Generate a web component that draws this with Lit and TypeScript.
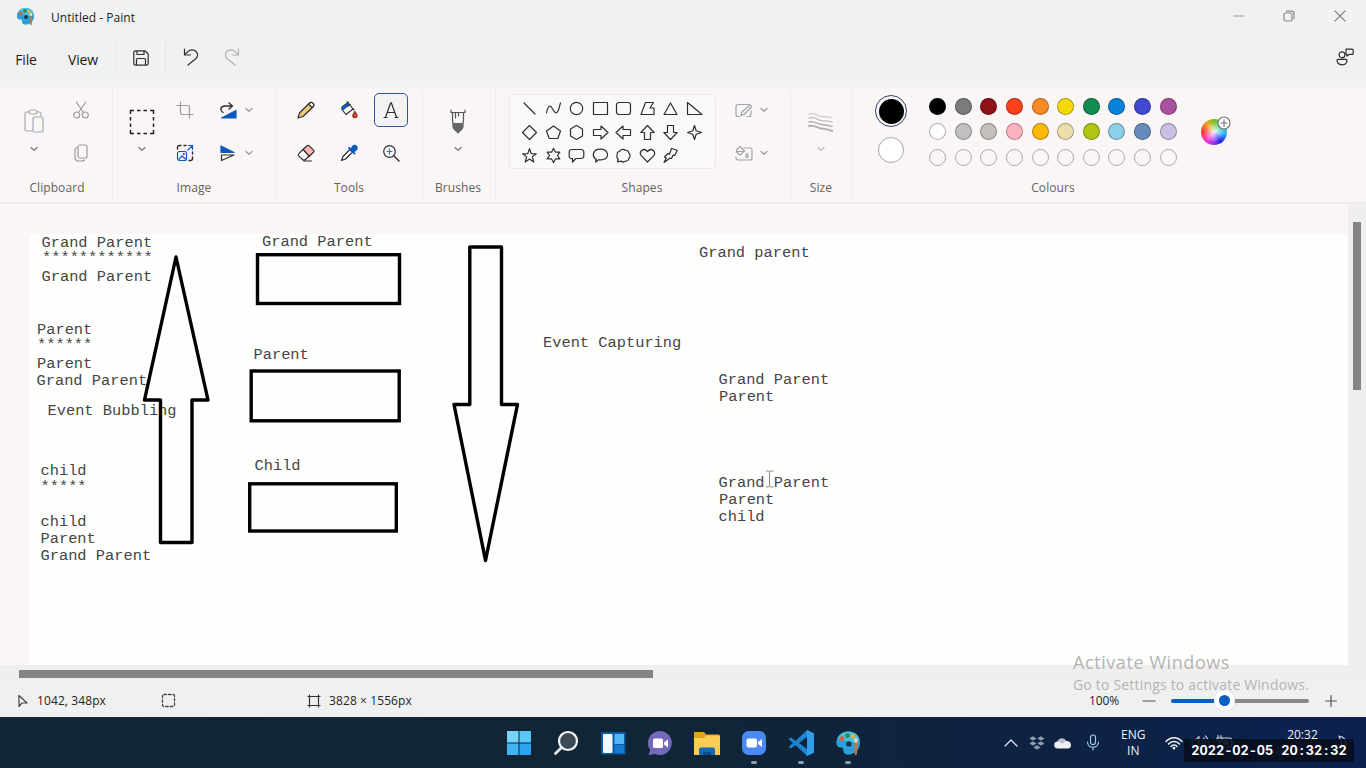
import { LitElement, html, svg, css } from "lit";
import { customElement } from "lit/decorators.js";

const icon = (w: number, h: number, body: unknown, color = "#2f2f2f") => html`
  <svg width=${w} height=${h} viewBox="0 0 ${w} ${h}" fill="none" stroke=${color}
    stroke-width="1.2" stroke-linecap="round" stroke-linejoin="round">${body}</svg>`;

const GREY = "#9c9c9e";
const BLUE = "#0a59bd";

const chevron = (color = "#77777a") => icon(8, 6, svg`<path d="M1 1.5 4 4.3 7 1.5"/>`, color);

const palette = () => svg`
  <path d="M9.5 1C4 1 1 5 1 9c0 2 1 3.4 2.6 3.5 2.4 0 2.4.6 2.4 2.2C6 17 8 18 10.5 17.600 15 17 18 13.500 18 9 18 4.500 14.500 1 9.500 1Z" fill="#2d9fd9" stroke="none"/>
  <path d="M2 6C4 2 7 1 10 1c4 0 7 3 7.700 6L12 9 8 8Z" fill="#43c1e4" stroke="none"/>
  <circle cx="5" cy="6.200" r="1.700" fill="#d95c3c" stroke="none"/>
  <circle cx="9" cy="4" r="1.700" fill="#40823b" stroke="none"/>
  <circle cx="13" cy="4.500" r="1.600" fill="#e6b33b" stroke="none"/>
  <circle cx="10" cy="10" r="1.900" fill="#15334d" stroke="none"/>
  <path d="M13.800 6h2.400v7.500l-.6 4.500h-1.200l-.6-4.500z" fill="#b77b48" stroke="none"/>
  <path d="M13.800 6h2.400v3h-2.400z" fill="#ead9bd" stroke="none"/>`;

const SHAPES = [
  svg`<path d="M3 3 14 14"/>`,
  svg`<path d="M1.500 13C3 5.500 5 4.500 7 8s4 7 6 3 1.500-6 2.500-8"/>`,
  svg`<circle cx="8.500" cy="8.500" r="6.200"/>`,
  svg`<rect x="1.500" y="2.500" width="14" height="12"/>`,
  svg`<rect x="1.500" y="2.500" width="14" height="12" rx="2.500"/>`,
  svg`<path d="M6.500 2.500h8L11 8h4v6.500H2z"/>`,
  svg`<path d="M8.500 3 15 14.500H2z"/>`,
  svg`<path d="M1.500 2.500v12h14.500z"/>`,
  svg`<path d="m8.500 1.500 7 7-7 7-7-7z"/>`,
  svg`<path d="m8.500 2 7 5-2.700 7.500H4.200L1.500 7z"/>`,
  svg`<path d="m8.500 1.500 6 3.400v7.200l-6 3.400-6-3.400V4.900z"/>`,
  svg`<path d="M1.500 5.500H9V2l7 6.500L9 15v-3.500H1.500z"/>`,
  svg`<path d="M15.500 5.500H8V2L1 8.500 8 15v-3.500h7.500z"/>`,
  svg`<path d="M5.500 15.500V8.500H1.800L8.500 1.500l6.700 7h-3.700v7z"/>`,
  svg`<path d="M5.500 1.500v7H1.800l6.700 7 6.700-7h-3.700v-7z"/>`,
  svg`<path d="m8.500 1.500 1.700 5.300 5.300 1.700-5.300 1.700-1.700 5.300-1.700-5.300-5.300-1.700 5.300-1.700z"/>`,
  svg`<path d="m8.500 1.800 1.800 4.900 5 .1-4 3.100 1.500 5-4.300-3-4.300 3 1.500-5-4-3.100 5-.1z"/>`,
  svg`<path d="m8.500 1.500 2 3.700h4.300L12.500 8.500l2.300 3.300h-4.300l-2 3.700-2-3.700H2.200l2.300-3.300-2.300-3.300h4.300z"/>`,
  svg`<path d="M4 2.500h9A2.500 2.500 0 0 1 15.800 5v4A2.500 2.500 0 0 1 13 11.500H8L4.500 15v-3.500A2.500 2.500 0 0 1 1.200 9V5A2.500 2.500 0 0 1 4 2.500z"/>`,
  svg`<path d="M3.500 15l.8-2.600C-.5 9.500.5 2.200 8.500 2.200s9 8 3.500 10c-2.500 1-4.500.8-5.500.500z"/>`,
  svg`<path d="M2.500 14.800 3.200 12C1.500 11 1.500 9 2.200 8c-.5-2 .5-3.500 2.500-3.700C6 2 9 1.800 10.300 3.300c2-.3 3.500 1 3.700 3 1.500 1.300 1.300 3.700 0 4.700 0 2-1.500 3.300-3.500 3-1.500 1.200-3.500 1-4.500 0z"/>`,
  svg`<path d="M8.500 15 2.200 8.700C-.5 5 4.500-.2 8.500 4.500c4-4.700 9 .5 6.300 4.200z"/>`,
  svg`<path d="m9.500 1.500 5.700 1.800-2.500 5.200-1.700-.3-1.500 3.300-1.800-.3-5.700 4.300L4.300 11l-1.800-1 3.500-3.500 1.500.8z"/>`,
];

const SWATCHES = [
  ["#000000", "#7b7b7a", "#8e1216", "#fb401c", "#fb8a25", "#f7d90a", "#128b50", "#0883dc", "#4149d0", "#a8529f"],
  ["#ffffff", "#c0c0bf", "#c4bfbd", "#fdb3c2", "#fdb808", "#ecdfaa", "#b0c612", "#8dcfe8", "#668bbb", "#c9c0e4"],
  Array(10).fill("transparent"),
];

const NOTES: [number, number, string][] = [
  [41.500, 235, "Grand Parent"], [42, 250, "************"], [41.500, 269, "Grand Parent"],
  [37, 322, "Parent"], [37, 337, "******"], [37, 356, "Parent"], [36.500, 373, "Grand Parent"],
  [47.500, 403, "Event Bubbling"],
  [40.500, 463, "child"], [40.500, 479, "*****"],
  [40.500, 514, "child"], [40.500, 531, "Parent"], [40.500, 548, "Grand Parent"],
  [262, 234, "Grand Parent"], [253.500, 347, "Parent"], [254.500, 458, "Child"],
  [699, 245, "Grand parent"], [543, 335, "Event Capturing"],
  [718.500, 372, "Grand Parent"], [719, 389, "Parent"],
  [718.500, 475, "Grand Parent"], [719, 492, "Parent"], [718.500, 509, "child"],
];

@customElement("paint-titlebar")
class PaintTitlebar extends LitElement {
  static styles = css`
    :host { display: block; background: #f0f1f1; color: #1d1d1d; }
    svg { display: block; }
    .title { display: flex; align-items: center; height: 33px; padding-left: 16px; }
    .name { font-size: 12px; letter-spacing: 0.04px; margin-left: 16px; flex: 1; padding-top: 1px; }
    .win { display: grid; grid-template-columns: 50px 50px 51px; place-items: center; padding: 0 1px 2px 0; }
    .menu { display: grid; grid-template-columns: 52px 62px 53px 47px 36px 1fr 43px; height: 53px; align-items: center; justify-items: center; box-sizing: border-box; }
    .item { font-size: 14px; letter-spacing: -0.2px; padding-bottom: 1px; }
    .save { display: grid; place-items: center; width: 49px; height: 31px; border-left: 1px solid #e6e6e7; border-right: 1px solid #e6e6e7; margin-bottom: 4px; }
    .hist { padding-bottom: 5px; }
  `;
  render() {
    return html`
      <div class="title">
        ${icon(19, 19, palette())}
        <span class="name">Untitled - Paint</span>
        <div class="win">
          ${icon(12, 12, svg`<path d="M1 6h10"/>`, GREY)}
          ${icon(12, 12, svg`<rect x="1" y="3" width="8" height="8" rx="1.500"/><path d="M3.500 1.200h5a2.500 2.500 0 0 1 2.500 2.500v5"/>`, "#8a8a8a")}
          ${icon(12, 12, svg`<path d="m1 1 10 10M11 1 1 11"/>`, "#8a8a8a")}
        </div>
      </div>
      <div class="menu">
        <span class="item">File</span>
        <span class="item">View</span>
        <div class="save">${icon(16, 16, svg`<path d="M2.500.8h9.300l3.400 3.200v9.500a1.700 1.700 0 0 1-1.700 1.700h-11A1.700 1.700 0 0 1 .8 13.500v-11A1.700 1.700 0 0 1 2.500.8zM4 1v3.500h7V1M3.500 15V9.500a1 1 0 0 1 1-1h7a1 1 0 0 1 1 1V15"/>`)}</div>
        <div class="hist">${icon(16, 18, svg`<path d="M1.500 1v6h6M2 6.500C5 2.500 9 .5 12.500 3c3 2.500 2.300 5.500.5 7.500L5 17"/>`)}</div>
        <div class="hist">${icon(16, 18, svg`<path d="M14.500 1v6h-6M14 6.500C11 2.500 7 .5 3.500 3c-3 2.500-2.300 5.500-.5 7.500L11 17"/>`, "#b0b0b2")}</div>
        <span></span>
        <div class="hist">${icon(18, 18, svg`<circle cx="6" cy="6.800" r="3"/><path d="M2 11.300h8a1 1 0 0 1 1 1C11 15 9 16.800 6 16.800s-5-1.800-5-4.500a1 1 0 0 1 1-1zM10 1.200h6.200a1 1 0 0 1 1 1v3.200a1 1 0 0 1-1 1h-3L11 8V6.300h-1z"/>`)}</div>
      </div>`;
  }
}

@customElement("paint-ribbon")
class PaintRibbon extends LitElement {
  static styles = css`
    :host { display: flex; height: 118px; background: #f9f6f5; border-bottom: 2px solid #ecebeb; box-sizing: border-box; box-shadow: inset 0 2px 1px #f4f3f3; }
    svg { display: block; }
    .group { display: flex; flex-direction: column; box-sizing: border-box; border-right: 1px solid #eeecec; }
    .group.last { border-right: none; }
    .body { display: grid; grid-template-rows: 43px 43px; height: 89px; padding-top: 2.500px; box-sizing: border-box; place-items: center; align-content: start; justify-content: start; }
    .label { font-size: 12px; letter-spacing: 0.08px; line-height: 16px; padding-top: 5px; text-align: center; color: #636262; }
    .big { grid-row: 1 / 3; align-self: start; display: flex; flex-direction: column; align-items: center; justify-content: space-between; height: 43px; padding-top: 20.500px; }
    .clipboard { width: 113px; }
    .clipboard .body { grid-template-columns: 44px 50px; padding-left: 12px; }
    .clipboard .label { padding-left: 2px; }
    .image { width: 163px; }
    .image .body { grid-template-columns: 56px 30px 12px 32px 10px; padding-left: 1px; }
    .tools { width: 147px; }
    .tools .body { grid-template-columns: 42.500px 42.500px 42.500px; padding-left: 9px; }
    .tools .active { display: grid; place-items: center; width: 34px; height: 34px; box-sizing: border-box; border: 1.500px solid #2b5797; border-radius: 5px; background: #f4f2f2; }
    .brushes { width: 73px; }
    .brushes .body { justify-content: center; }
    .brushes .body, .brushes .label { padding-right: 2px; }
    .shapes { width: 295px; }
    .shapes .body { grid-template-columns: 207px 16px 24px 16px; padding-left: 13px; }
    .shapes .label { padding-right: 2px; }
    .gallery { grid-row: 1 / 3; display: grid; grid-template-columns: repeat(8, 23.500px); grid-template-rows: repeat(3, 23.500px); width: 207px; height: 75px; padding: 2px 11px 2px 8px; box-sizing: border-box; place-items: center; border: 1px solid #ebe9e9; border-radius: 4px; background: #fbf9f8; align-self: start; margin-top: 5.500px; }
    .size { width: 61px; }
    .size .body { justify-content: center; }
    .colours { width: 402px; }
    .colours .body { display: flex; align-items: flex-start; padding: 0 0 0 22px; }
    .current { display: flex; flex-direction: column; align-items: center; gap: 10px; padding-top: 9px; width: 34px; }
    .primary { width: 32px; height: 32px; box-sizing: border-box; border-radius: 50%; border: 1.500px solid #2d4470; padding: 2.500px; background: #000 content-box; }
    .secondary { width: 26px; height: 26px; box-sizing: border-box; border-radius: 50%; border: 1.500px solid #a8a7a7; background: #fff; }
    .swatches { display: grid; grid-template-columns: repeat(10, 25.600px); grid-auto-rows: 25.600px; margin: 7.500px 0 0 17px; place-items: center; }
    .swatch { width: 17px; height: 17px; box-sizing: border-box; border-radius: 50%; border: 1.500px solid #0000004d; }
    .wheel { position: relative; width: 26px; height: 26px; border-radius: 50%; margin: 33px 0 0 20px; background: radial-gradient(circle, #ffffffe6 0, #ffffff00 58%), conic-gradient(#6fc41c, #3fd0b0 60deg, #28b8f0 95deg, #2222ee 145deg, #8a2df0 175deg, #f63ad0 220deg, #fb3d2a 275deg, #f5a020 320deg, #6fc41c); }
    .plus { position: absolute; left: 16px; top: -3px; }
  `;
  render() {
    return html`
      <div class="group clipboard">
        <div class="body">
          <div class="big">
            ${icon(20, 24, svg`<path d="M8 22H2.500A1.500 1.500 0 0 1 1 20.500v-16A1.500 1.500 0 0 1 2.500 3H5M13 3h2.500A1.500 1.500 0 0 1 17 4.500V7"/><rect x="5" y="1" width="8" height="4" rx="2"/><rect x="9" y="8" width="10" height="15" rx="1.500" stroke="#9ca8bd"/>`, "#aaa9aa")}
            ${chevron()}
          </div>
          ${icon(16, 18, svg`<circle cx="3.700" cy="14" r="3"/><circle cx="12.300" cy="14" r="3"/><path d="M3.300 1 10.500 11.500M12.700 1 5.500 11.500"/>`, GREY)}
          ${icon(14, 18, svg`<rect x="4" y="1" width="9" height="13" rx="2"/><path d="M2.500 3.500C1.500 4 1 4.500 1 6v7.500A3.500 3.500 0 0 0 4.500 17H8c1.500 0 2-.500 2.500-1"/>`, GREY)}
        </div>
        <span class="label">Clipboard</span>
      </div>
      <div class="group image">
        <div class="body">
          <div class="big">
            ${icon(26, 26, svg`<path d="M1.500 5V1.500H5M8 1.500h3.500M14.500 1.500H18M21 1.500h3.500V5M24.500 8v3.500M24.500 14.500V18M24.500 21v3.500H21M18 24.500h-3.500M11.500 24.500H8M5 24.500H1.500V21M1.500 18v-3.500M1.500 11.500V8" stroke-width="1.500" stroke-linecap="butt" stroke-linejoin="miter"/>`, "#222")}
            ${chevron()}
          </div>
          ${icon(18, 18, svg`<path d="M4.500 1v11a1.500 1.500 0 0 0 1.500 1.500h11M1 4.500h11A1.500 1.500 0 0 1 13.500 6v11"/>`, GREY)}
          <span></span>
          ${icon(17, 17, svg`<path d="M16 8.500V16H1.500z" fill=${BLUE} stroke=${BLUE}/><path d="M3 10.500C-.5 8 .5 4 5 4h7M9 1l3.500 3L9 7" stroke-width="1.400"/>`)}
          ${chevron("#9c9c9e")}
          ${icon(18, 18, svg`<path d="M1.500 5V3.500a2 2 0 0 1 2-2H5M8 1.500h2M16.500 8v2M16.500 13v1.500a2 2 0 0 1-2 2H13" stroke-width="1.400"/><rect x="1.500" y="7.500" width="9" height="9" rx="2" stroke=${BLUE}/><path d="m3 15 3-3 3.500 3M12 6l4.500-4.500M12.500 1.500h4v4" stroke=${BLUE}/><circle cx="7.800" cy="10" r=".5" stroke=${BLUE}/>`)}
          <span></span>
          ${icon(16, 17, svg`<path d="M1 1v6.500h13z" fill=${BLUE} stroke=${BLUE}/><path d="M1.500 10v5.500L14 10z"/>`)}
          ${chevron("#9c9c9e")}
        </div>
        <span class="label">Image</span>
      </div>
      <div class="group tools">
        <div class="body">
          ${icon(18, 18, svg`<path d="m1 17 1.500-5L12.500 2a2 2 0 0 1 3 0l.7.700a2 2 0 0 1 0 3L6 15.500z" fill="#e9cb78"/><path d="m11.500 3 3.500 3.500 1.200-1.200a2 2 0 0 0 0-2.600l-.6-.6a2 2 0 0 0-2.800 0z" fill="#fff"/>`)}
          ${icon(18, 18, svg`<path d="M2 6 8 1.500 13 8l-7 5.500-4-5z" fill="#fff"/><path d="m2 7.500 6-5 1 1.200-6 5z" fill=${BLUE} stroke=${BLUE}/><path d="M8 1.500 7 .8M8 5l2-1.500M13 8l1 .8"/><path d="M15 10.500c1.500 2 2 3 2 4a2 2 0 0 1-4.200 0c0-1 .8-2 2.200-4z" fill="#d24a2a" stroke="#8b3520"/>`)}
          <div class="active">${icon(18, 18, svg`<path d="M2 16.500h3M13 16.500h3M3.500 16.300 8.700 1.800h.6L14.500 16.300M5.500 11.500h7"/>`)}</div>
          ${icon(18, 18, svg`<path d="m6 5.500 4-3.800a1.500 1.500 0 0 1 2 0l4.500 4.500a1.500 1.500 0 0 1 0 2L12 12.500z" fill="#fbb4b2"/><path d="m6 5.500 6 6.500-3.500 3.500a2 2 0 0 1-3 0l-3.700-3.700a1.500 1.500 0 0 1 0-2.200z" fill="#fff"/><path d="M7 17h7.500"/>`)}
          ${icon(18, 18, svg`<path d="M1.500 16.500 3 12.500l7-7 2.500 2.500-7 7z" fill="#fff"/><path d="m9 4 5.500 5.500M11 5.500l2-3a2 2 0 0 1 3.200 0 2 2 0 0 1 0 3L13 8z" fill=${BLUE} stroke=${BLUE} stroke-width="1.800"/>`)}
          ${icon(18, 18, svg`<circle cx="7.500" cy="7.500" r="5.800"/><path d="m12 12 5 5" stroke-width="1.400"/><path d="M7.500 5v5M5 7.500h5" stroke="#3478bb"/>`)}
        </div>
        <span class="label">Tools</span>
      </div>
      <div class="group brushes">
        <div class="body">
          <div class="big">
            ${icon(16, 25, svg`<path d="M1 1v2.500h14V1M2.500 4v8l1.500 5h8l1.500-5V4M5.500 4v5M8.500 4v3"/><path d="M3 14.500h10V18c0 2-3 3-5 6-2-3-5-4-5-6z" fill="#666" stroke="#666"/>`, "#555")}
            ${chevron()}
          </div>
        </div>
        <span class="label">Brushes</span>
      </div>
      <div class="group shapes">
        <div class="body">
          <div class="gallery">${SHAPES.map((s) => icon(17, 17, s))}</div>
          <span></span>
          ${icon(18, 15, svg`<path d="M15 1.500H3a2 2 0 0 0-2 2v8a2 2 0 0 0 2 2h2M12 13.500h2a2 2 0 0 0 2-2V8M6 12.500l1-3.500 7.500-6.500q2-.5 2 1.500L9 11.500z"/>`, "#a0a3aa")}
          ${chevron("#9c9c9e")}
          <span></span>
          ${icon(18, 16, svg`<path d="M9 3h6a2 2 0 0 1 2 2v8a2 2 0 0 1-2 2H3a2 2 0 0 1-2-2v-1M5 1.500 1.500 5v2L5 10l4.500-4zM2 6.500h7M12 8.500c1.500 2 1.500 4 0 4s-1.500-2 0-4z"/>`, "#a3a3a5")}
          ${chevron("#9c9c9e")}
        </div>
        <span class="label">Shapes</span>
      </div>
      <div class="group size">
        <div class="body">
          <div class="big">
            ${icon(26, 25, svg`<path d="M1 5c6-2 8 2 12 2.500s7 0 11 1" stroke-width=".8"/><path d="M1 9c6-2 8 2 12 2.500s7 0 11 1.500" stroke-width="1.200"/><path d="M1 13c6-1.500 8 2 12 2.500s7 .500 11 2" stroke-width="1.600"/><path d="M1 17c6-1.500 8 2 12 2.500s7 .500 11 2.500" stroke-width="2"/>`, "#b2b1b1")}
            ${chevron("#bcbcbd")}
          </div>
        </div>
        <span class="label">Size</span>
      </div>
      <div class="group colours last">
        <div class="body">
          <div class="current"><div class="primary"></div><div class="secondary"></div></div>
          <div class="swatches">
            ${SWATCHES.flat().map((c) => html`<div class="swatch" style="background-color:${c}"></div>`)}
          </div>
          <div class="wheel">
            <span class="plus">${icon(14, 14, svg`<circle cx="7" cy="7" r="6" fill="#fff"/><path d="M7 3.800v6.400M3.800 7h6.400"/>`, "#777")}</span>
          </div>
        </div>
        <span class="label">Colours</span>
      </div>`;
  }
}

@customElement("paint-workspace")
class PaintWorkspace extends LitElement {
  static styles = css`
    :host { display: grid; grid-template-columns: 1348px 18px; grid-template-rows: 461px 18px; background: #f0efee; }
    .stage { background: #f9f6f5; padding: 30px 0 0 29px; }
    .canvas { position: relative; height: 431px; background: #fefefd; }
    .drawing { position: absolute; left: 0; top: 0; }
    .note { position: absolute; white-space: pre; font: 15.360px/17px "Liberation Mono", monospace; color: #454545; }
    .vscroll { padding: 18px 5px 0; }
    .vthumb { height: 168px; background: #858483; }
    .hscroll { padding: 5px 0 0 19px; }
    .hthumb { width: 634px; height: 8px; background: #858483; }
  `;
  render() {
    return html`
      <div class="stage">
        <div class="canvas">
          ${NOTES.map(([x, y, text]) => html`<span class="note" style="left:${x - 29}px;top:${y - 234}px">${text}</span>`)}
          <svg class="drawing" width="1319" height="431" viewBox="29 234 1319 431" fill="none" stroke="#000" stroke-width="3.400" stroke-linejoin="round">
            <path d="M176 257 144.500 400H160.500V542.500H192V400H208z"/>
            <path d="M469.800 247H501.500V404.500H517.500L485.500 560.500 454 404.500H469.800z"/>
            <rect x="257.500" y="254.700" width="142" height="48.800" stroke-linejoin="miter"/>
            <rect x="251.200" y="371" width="148" height="49.800" stroke-linejoin="miter"/>
            <rect x="249.700" y="483.800" width="146.600" height="47.200" stroke-linejoin="miter"/>
            <path d="M766 471h2.500l1 1 1-1h3M769.500 472v14M766 487h2.500l1-1 1 1h3" stroke="#888" stroke-width="1"/>
          </svg>
        </div>
      </div>
      <div class="vscroll"><div class="vthumb"></div></div>
      <div class="hscroll"><div class="hthumb"></div></div>`;
  }
}

@customElement("paint-status")
class PaintStatus extends LitElement {
  static styles = css`
    :host { display: grid; grid-template-columns: 18px 19px 124px 146px 22px 760px 53px 29px 138px 1fr; align-items: center; height: 34px; background: #f0f0f0; font-size: 12px; letter-spacing: 0.1px; color: #262626; box-sizing: border-box; padding-top: 1px; position: relative; }
    svg { display: block; }
    .zoom { letter-spacing: -0.1px; }
    .slider { display: flex; align-items: center; }
    .filled { width: 43px; height: 4px; border-radius: 2px 0 0 2px; background: #0a5fc0; }
    .knob { width: 11px; height: 11px; border: 5px solid #fff; border-radius: 50%; background: #0a5fc0; box-shadow: 0 0 1px #bbb; }
    .rest { flex: 1; height: 4px; border-radius: 0 2px 2px 0; background: #8a898a; }
    .more { padding-left: 16px; }
    .activate { position: absolute; left: 1073px; top: -33px; color: #b4b4b4; white-space: nowrap; }
    .big { font-size: 18px; line-height: 24px; letter-spacing: 0.58px; }
    .small { font-size: 14px; line-height: 21px; letter-spacing: 0.19px; }
  `;
  render() {
    return html`
      <span></span>
      ${icon(10, 14, svg`<path d="M1 1.500v11L4 9h5z"/>`, "#444")}
      <span>1042, 348px</span>
      ${icon(15, 15, svg`<rect x="1.500" y="1.500" width="12" height="12" rx="1.500" stroke-dasharray="2.500 2" stroke-width="1.300"/>`, "#444")}
      ${icon(14, 14, svg`<path d="M2.500 1v12M11.500 1v12M1 2.500h12M1 11.500h12"/>`, "#333")}
      <span>3828 × 1556px</span>
      <span class="zoom">100%</span>
      ${icon(14, 12, svg`<path d="M1 6h12"/>`, "#555")}
      <div class="slider"><div class="filled"></div><div class="knob"></div><div class="rest"></div></div>
      <div class="more">${icon(12, 12, svg`<path d="M.6 6h10.800M6 .6v10.800"/>`, "#555")}</div>
      <div class="activate">
        <div class="big">Activate Windows</div>
        <div class="small">Go to Settings to activate Windows.</div>
      </div>`;
  }
}

@customElement("task-bar")
class TaskBar extends LitElement {
  static styles = css`
    :host { display: flex; height: 51px; background: linear-gradient(90deg, #112735, #102536 50%, #0e2340 72%, #0c2150); position: relative; color: #eef1f5; font-size: 12px; }
    svg { display: block; }
    .apps { display: grid; grid-template-columns: repeat(8, 47.100px); margin-left: 495px; padding-top: 13px; }
    .app { display: flex; flex-direction: column; align-items: center; gap: 5px; }
    .running { width: 6px; height: 3px; border-radius: 2px; background: #929cab; }
    .tray { display: grid; grid-template-columns: 26px 26px 27px 32px 49px 32px 21px 29px 78px 46px; margin-left: 126px; place-items: center; }
    .lang { text-align: center; line-height: 16px; letter-spacing: 0.1px; }
    .clock { justify-self: end; text-align: right; line-height: 16px; white-space: nowrap; }
    .date { font-size: 11px; color: #9aa2b1; }
    .stamp { position: absolute; left: 1184px; top: 22px; width: 170px; height: 23px; background: #070c1be0; color: #fff; font: 700 12.700px/23px Inter, sans-serif; font-variant-numeric: tabular-nums; text-align: center; white-space: nowrap; }
    .sep { display: inline-block; width: 8.100px; text-align: center; }
  `;
  render() {
    const apps = [
      svg`<g stroke="none"><path d="M1 1h11.500v11.500H1z" fill="#74d3f8"/><path d="M13.500 1H25v11.500H13.500z" fill="#5bc7f7"/><path d="M1 13.500h11.500V25H1z" fill="#42b4f3"/><path d="M13.500 13.500H25V25H13.500z" fill="#2ca3ed"/></g>`,
      svg`<circle cx="15" cy="11" r="9" fill="#3d4b56" stroke="#f1f3f5" stroke-width="2.200"/><path d="m8.500 17.500-6 6" stroke="#e6e9ec" stroke-width="2.800"/>`,
      svg`<g stroke="none"><rect x="1" y="2" width="24.500" height="22.500" rx="1" fill="#0b5aa9"/><rect x="3" y="4" width="9.500" height="19" rx="1" fill="#f4f7fb"/><rect x="14.500" y="4" width="9.500" height="10" fill="#52b8f4"/><rect x="14.500" y="15" width="9.500" height="8" fill="#167ad0"/></g>`,
      svg`<g stroke="none"><path d="M13 1a12 12 0 1 1-5 23L1.500 25l1.700-5A12 12 0 0 1 13 1z" fill="#7269b8"/><rect x="6" y="8.500" width="10" height="9.500" rx="1.500" fill="#fff"/><path d="m17 12.500 4-3v8l-4-3z" fill="#fff"/></g>`,
      svg`<g stroke="none"><path d="M1 2h9l2 2.500h12.500a1 1 0 0 1 1 1V25H0V3a1 1 0 0 1 1-1z" fill="#e4a11b"/><path d="M0 8h10l2-2.500h14V25H0z" fill="#fbcd55"/><path d="M5 25v-5.500a2 2 0 0 1 2-2h12a2 2 0 0 1 2 2V25z" fill="#1768b3"/><path d="M9 22h8v3H9z" fill="#0e4c8c"/></g>`,
      svg`<g stroke="none"><rect x="1" y="1" width="24" height="24" rx="6.500" fill="#4a88f2"/><rect x="5.500" y="8.500" width="10.500" height="9" rx="2" fill="#fff"/><path d="m17 12 4-3v8l-4-3z" fill="#fff"/></g>`,
      svg`<g stroke="none"><path d="M19 0 26 3.500v19L19 26 7.500 15 3 18.500.5 17 5 13 .5 9 3 7.500 7.500 11zM19 7l-8 6 8 6z" fill="#1d83cf" fill-rule="evenodd"/><path d="M19 0 26 3.500v19L19 26z" fill="#329ee8"/></g>`,
      svg`<g transform="scale(1.390)">${palette()}</g>`,
    ];
    const sep = (c: string) => html`<span class="sep">${c}</span>`;
    return html`
      <div class="apps">
        ${apps.map((a, i) => html`<div class="app">${icon(26, 26, a)}${i > 4 ? html`<div class="running"></div>` : ""}</div>`)}
      </div>
      <div class="tray">
        ${icon(14, 8, svg`<path d="m1 7 6-6 6 6"/>`, "#e5e8ee")}
        ${icon(16, 15, svg`<path d="m4 1 4 2.500L4 6 0 3.500zM12 1l4 2.500L12 6 8 3.500zM4 6l4 2.500L4 11 0 8.500zM12 6l4 2.500-4 2.500-4-2.500zM8 10l4 2.500L8 15l-4-2.500z" fill="#8f9daf" stroke="#102440" stroke-width=".7"/>`)}
        ${icon(18, 12, svg`<path d="M4 11.500a3.500 3.500 0 0 1-.5-7C5 1 10 0 12 4c3-.5 5 1.500 5 4 0 2-1 3.500-3 3.500z" fill="#eceff3" stroke="none"/><path d="M3.500 4.500C5 1 10 0 12 4L9 6.500z" fill="#b8c0cc" stroke="none"/>`)}
        ${icon(14, 17, svg`<rect x="4.500" y="1" width="5" height="9.500" rx="2.500"/><path d="M1.500 8c0 7 11 7 11 0M7 13.500V16"/>`, "#9ec6e8")}
        <div class="lang">ENG<br />IN</div>
        ${icon(18, 14, svg`<path d="M1 5.500c4.500-5 11.500-5 16 0M3.500 8c3-3.500 8-3.500 11 0M6 10.500c1.500-2 4.500-2 6 0" stroke-width="1.500"/><circle cx="9" cy="12.200" r=".8" fill="#fff"/>`, "#eef1f5")}
        ${icon(18, 16, svg`<path d="M1 5.500h3l4-4v13l-4-4H1zM10.500 5c1.500 2 1.500 4 0 6M12.500 3c3 3 3 7 0 10M14.500 1c4 4 4 10 0 14"/>`, "#b4bdca")}
        ${icon(18, 16, svg`<path d="M6 3h8a1.500 1.500 0 0 1 1.500 1.500v6A1.500 1.500 0 0 1 14 12H5M17 6v3M2 .6v2.400M5 .6v2.400M1 3h5v2.500L3.500 7 1 5.500zM3.500 7v5"/><path d="M7 5h6v5H7z" fill="#8b94a5" stroke="none"/>`, "#ccd2db")}
        <div class="clock">20:32<div class="date">05-02-2022</div></div>
        ${icon(12, 16, svg`<path d="M4 1c5 1 7 4 7 7.500S8 14.500 3 14c3-2 4-3 3.500-6S4.500 3 4 1z"/>`, "#cdd4df")}
      </div>
      <div class="stamp">2022${sep("-")}02${sep("-")}05<span class="sep"> </span>20${sep(":")}32${sep(":")}32</div>`;
  }
}

@customElement("app-root")
class AppRoot extends LitElement {
  static styles = css`
    :host { display: grid; grid-template-rows: 86px 118px 479px 34px 51px; width: 1366px; height: 768px; overflow: hidden; font-family: "Open Sans", "Noto Sans", sans-serif; background: #f0efef; }
  `;
  render() {
    return html`
      <paint-titlebar></paint-titlebar>
      <paint-ribbon></paint-ribbon>
      <paint-workspace></paint-workspace>
      <paint-status></paint-status>
      <task-bar></task-bar>`;
  }
}
